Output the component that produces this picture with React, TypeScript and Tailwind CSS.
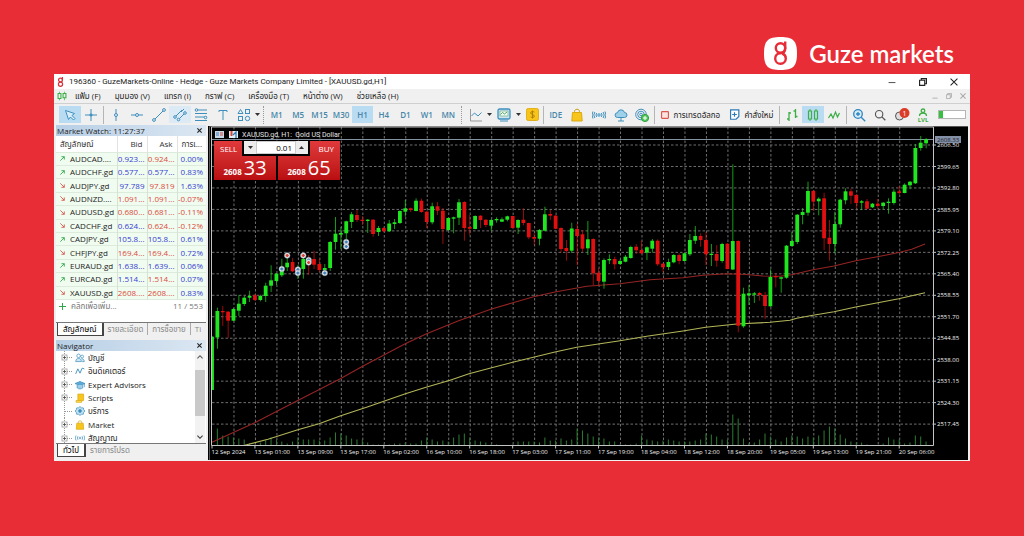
import { ReactNode } from 'react'
import clsx from 'clsx'

type Dir = 'u' | 'd'
// direction, high, body top, body bottom, low
type Candle = [Dir, number, number, number, number]

const STEP = 5.369
const LEFT = 212
const RIGHT = 933
const TOP = 127
const BASE = 445.5

const candles: Candle[] = [
  ['u', 336, 336.7, 390, 390], ['u', 307.7, 311, 337.5, 348.7], ['d', 306, 311, 312.3, 326], ['d', 311, 311.7, 320.7, 338],
  ['u', 308, 309, 320.7, 321], ['u', 295, 303.7, 310.7, 316], ['u', 296, 297.7, 304, 306], ['u', 290.7, 296, 297.7, 302],
  ['d', 294, 295.3, 300, 301], ['u', 294.7, 296, 300, 301.3], ['u', 282.7, 285.7, 296, 302], ['u', 265.3, 280.3, 285.7, 292],
  ['u', 273, 273.7, 281, 285], ['u', 258.7, 268.7, 275.3, 277], ['u', 253.7, 262.7, 267.3, 271], ['d', 258, 262, 271.3, 272],
  ['u', 265, 268, 272, 279], ['u', 253.7, 259, 269, 278.7], ['d', 255, 258, 263, 275], ['d', 250.7, 259, 264.7, 269],
  ['d', 258.7, 264, 270, 272], ['u', 264, 268, 270, 273], ['u', 241, 242, 268, 271], ['u', 217, 233.7, 242, 249.7],
  ['u', 227, 233, 234.7, 249], ['u', 220.7, 221.3, 233.3, 239], ['u', 212, 214.3, 222, 228], ['d', 210, 215, 220, 222],
  ['d', 216, 219.7, 221, 225], ['u', 219, 219.7, 221, 233], ['d', 219, 219.7, 234, 236.7], ['u', 226, 228, 232, 236],
  ['d', 227, 228, 231.3, 232], ['u', 220, 223.5, 231.3, 232], ['u', 219, 222.3, 224, 229], ['u', 210.3, 211, 223, 224],
  ['u', 200, 208.3, 211.7, 216.7], ['d', 207.7, 208.3, 210, 212], ['u', 198.3, 200.7, 211, 211.3], ['d', 198.7, 200.7, 212, 212.7],
  ['d', 211, 211.7, 222, 228], ['u', 202.7, 206.3, 222.3, 224.3], ['d', 202, 206.3, 210.7, 215], ['d', 208, 210.7, 229, 244],
  ['u', 217.7, 218, 230, 231], ['u', 216.7, 217.3, 218.7, 233.3], ['u', 199, 202.3, 217.7, 225], ['d', 201.3, 202, 228, 240.7],
  ['d', 215, 227, 228.7, 235], ['u', 215.3, 216, 229, 229.3], ['d', 215.3, 215.7, 220, 228], ['d', 219.3, 219.7, 225, 227.3],
  ['u', 219, 220, 225.7, 230.7], ['u', 217.3, 219, 220.3, 222.7], ['u', 217.3, 219.3, 221.7, 222], ['u', 215.7, 216.3, 219.7, 221.3],
  ['d', 215.7, 216, 228, 228.7], ['u', 219.3, 220, 227.7, 234], ['d', 208.3, 219.7, 223, 225.3], ['d', 222.7, 223, 237.3, 239.3],
  ['d', 233, 237, 238.7, 244.7], ['u', 229, 230, 238.7, 245.3], ['u', 206.7, 214.3, 230.7, 231.3], ['d', 210, 214, 215.7, 220],
  ['d', 215, 215.7, 228.7, 229.3], ['d', 227.3, 228, 249, 252.7], ['d', 240, 248, 251, 260.7], ['u', 222.7, 228.5, 250.7, 253],
  ['d', 223.7, 229, 236, 265], ['d', 230, 234.3, 248.7, 251.7], ['u', 221, 239.3, 248.3, 255], ['d', 238.3, 239, 273.3, 285],
  ['d', 268, 272.7, 281, 285], ['u', 258.3, 260, 281.7, 288.7], ['u', 254.3, 259, 260.3, 264], ['d', 256.7, 259, 264.3, 269.3],
  ['u', 259.3, 261, 264, 265], ['u', 255, 256.7, 261.7, 262.3], ['u', 245.7, 247, 258, 258.7], ['d', 244, 246.7, 250.3, 254],
  ['d', 240.7, 250, 253.3, 254], ['u', 246.3, 247.3, 252.7, 260], ['u', 239, 240.7, 248.7, 252.7], ['d', 239.3, 240.7, 264.3, 266],
  ['d', 263, 263.7, 267.3, 272.3], ['u', 258.7, 262, 267, 270], ['u', 254, 255, 262.3, 263.3], ['d', 253.3, 255, 261, 264.3],
  ['u', 252.7, 253.3, 261, 261.7], ['u', 234, 240, 254.3, 256], ['u', 226, 236, 240.7, 244], ['d', 233.3, 236, 240, 246.7],
  ['d', 232.3, 240, 254.3, 265], ['u', 244, 253.7, 255, 266], ['d', 245, 254, 260.7, 266.7], ['u', 242.7, 244, 261, 262.7],
  ['d', 243, 243.7, 269, 269.3], ['u', 164.3, 241, 269.5, 270], ['d', 240.3, 241, 325.7, 332.3], ['u', 287.7, 293.7, 326.3, 327.7],
  ['u', 285, 293.3, 295.3, 305], ['u', 292, 293.3, 294.7, 303], ['d', 292, 293, 295, 300.7], ['d', 292, 295, 306, 319],
  ['u', 269.3, 277, 306.3, 306.7], ['d', 273.3, 276, 277.3, 287.3], ['u', 276.7, 277.3, 278.7, 292.7], ['u', 245, 245.7, 277.7, 278.7],
  ['u', 231.7, 241, 246, 246.7], ['u', 214, 214.7, 242, 244], ['u', 208, 212, 215, 224.3], ['u', 181.7, 191, 212.7, 215.7],
  ['d', 190, 191, 201.7, 210.7], ['u', 197.3, 198.7, 201.3, 215.3], ['d', 192.7, 198.3, 238.3, 250], ['d', 220, 237.7, 244, 260.7],
  ['u', 211.7, 224, 244, 253.3], ['u', 198.7, 199.7, 224.3, 227.7], ['u', 188.3, 191.3, 200.3, 204.3], ['d', 188.7, 191.3, 195.7, 204],
  ['d', 194, 195, 203, 208.3], ['u', 200, 201.3, 202.7, 210], ['d', 199, 201.3, 208.7, 209.3], ['u', 203, 203.7, 207.3, 208],
  ['d', 199, 203.7, 206, 208.7], ['u', 202, 202.7, 206, 209.3], ['u', 198.3, 201.7, 203, 213.7], ['u', 189.3, 191.7, 203, 204.7],
  ['d', 186, 191.3, 193, 194.3], ['u', 183.3, 184.7, 193, 193.3], ['u', 181, 181.7, 185.3, 189.3], ['u', 144, 148, 183.3, 184],
  ['u', 136, 142.7, 148, 150.7], ['u', 138, 139.3, 143.3, 148.3],
]

const volumes = [
  0, 17, 10, 9, 8, 7, 6, 2, 1, 3, 5, 8, 6, 4, 2, 4, 8, 6, 6, 6, 5, 5, 8, 13, 12, 10, 7, 6, 6, 3, 1, 1, 1, 1, 2, 2, 3, 2, 2, 5,
  8, 6, 4, 5, 4, 8, 11, 12, 8, 5, 4, 3, 1, 1, 0, 0, 1, 4, 4, 4, 4, 3, 8, 5, 5, 7, 5, 6, 17, 15, 12, 9, 8, 7, 4, 4, 1, 1, 1, 2,
  10, 6, 5, 4, 5, 6, 5, 4, 4, 4, 5, 6, 12, 11, 9, 6, 6, 31, 27, 7, 2, 3, 6, 12, 9, 6, 4, 8, 10, 9, 7, 9, 8, 10, 15, 19, 17, 11,
  7, 4, 3, 3, 1, 0, 0, 2, 8, 6, 6, 2, 3, 10, 9, 4,
]

const fastMa =
  '212,442.3 254.7,422.7 297.3,400.7 340.3,378.7 361.7,366.7 404.7,344 426,334 458,321 490.7,309.3 512,303 533.7,296.7 555,292 586.7,286.3 620,283.7 650,279.7 683,277.7 703,275.3 726.7,273.7 746.7,274.5 763,276 780,276.3 791.7,274.7 813,269.7 834,266 855.7,260.7 880,256.3 900,252.3 911.7,249.3 925,244'
const slowMa =
  '244.7,445.3 268,439.3 297,430 319,423.7 340,416 368,406.7 404.7,394 426,387.3 450,380.3 469,373.7 490.7,368 512.7,362.3 555,352 576.7,347.3 620,340.7 646.7,336.3 683,331 705.7,327.3 736.7,324 770,322.3 790,320.3 796.7,318.3 813,315.3 834,311.7 855.7,307 898.7,298.7 925,292.7'

const times = [
  '12 Sep 2024', '13 Sep 01:00', '13 Sep 09:00', '13 Sep 17:00', '16 Sep 02:00', '16 Sep 10:00', '16 Sep 18:00',
  '17 Sep 03:00', '17 Sep 11:00', '17 Sep 19:00', '18 Sep 04:00', '18 Sep 12:00', '18 Sep 20:00', '19 Sep 05:00',
  '19 Sep 13:00', '19 Sep 21:00', '20 Sep 06:00',
]

const prices = [
  '2606.50', '2599.65', '2592.80', '2585.95', '2579.10', '2572.25', '2565.40', '2558.55', '2551.70', '2544.85',
  '2538.00', '2531.15', '2524.30', '2517.45',
]

// trade markers: candle index, y, colour
const markers: [number, number, string][] = [
  [13, 269, '#3d7fb8'], [14, 255.5, '#d8443a'], [16, 269.5, '#3d7fb8'], [16, 273, '#3d7fb8'], [17, 255.5, '#d8443a'],
  [18, 260, '#3d7fb8'], [18, 262.5, '#d8443a'], [21, 273, '#3d7fb8'], [25, 242, '#3d7fb8'], [25, 246.5, '#3d7fb8'],
]

const quotes = [
  { symbol: 'AUDCAD....', up: true, bid: '0.923...', bidUp: true, ask: '0.924...', askUp: false, change: '0.00%' },
  { symbol: 'AUDCHF.gd', up: true, bid: '0.577...', bidUp: true, ask: '0.577...', askUp: true, change: '0.83%' },
  { symbol: 'AUDJPY.gd', up: false, bid: '97.789', bidUp: true, ask: '97.819', askUp: false, change: '1.63%' },
  { symbol: 'AUDNZD....', up: false, bid: '1.091...', bidUp: false, ask: '1.091...', askUp: false, change: '-0.07%' },
  { symbol: 'AUDUSD.gd', up: false, bid: '0.680...', bidUp: false, ask: '0.681...', askUp: false, change: '-0.11%' },
  { symbol: 'CADCHF.gd', up: false, bid: '0.624...', bidUp: true, ask: '0.624...', askUp: false, change: '-0.12%' },
  { symbol: 'CADJPY.gd', up: true, bid: '105.8...', bidUp: true, ask: '105.8...', askUp: true, change: '0.61%' },
  { symbol: 'CHFJPY.gd', up: false, bid: '169.4...', bidUp: false, ask: '169.4...', askUp: false, change: '0.72%' },
  { symbol: 'EURAUD.gd', up: true, bid: '1.638...', bidUp: true, ask: '1.639...', askUp: true, change: '0.06%' },
  { symbol: 'EURCAD.gd', up: true, bid: '1.514...', bidUp: true, ask: '1.514...', askUp: false, change: '0.07%' },
  { symbol: 'XAUUSD.gd', up: false, bid: '2608....', bidUp: false, ask: '2608....', askUp: false, change: '0.83%' },
]

const menus = ['แฟ้ม (F)', 'มุมมอง (V)', 'แทรก (I)', 'กราฟ (C)', 'เครื่องมือ (T)', 'หน้าต่าง (W)', 'ช่วยเหลือ (H)']
const timeframes = ['M1', 'M5', 'M15', 'M30', 'H1', 'H4', 'D1', 'W1', 'MN']

function Glyph({ children, color = '#3f8fbd', size = 'size-[14px]' }: { children: ReactNode; color?: string; size?: string }) {
  return (
    <svg viewBox="0 0 14 14" className={clsx(size, 'shrink-0')} fill="none" stroke={color} strokeWidth="1" aria-hidden="true">
      {children}
    </svg>
  )
}

const drawTools: { label: string; icon: ReactNode; active?: boolean }[] = [
  { label: 'Vertical line', icon: <><path d="M7 1v12" /><circle cx="7" cy="7" r="1.5" fill="#f0f0f0" /></> },
  { label: 'Horizontal line', icon: <><path d="M1 7h12" /><circle cx="7" cy="7" r="1.5" fill="#f0f0f0" /></> },
  { label: 'Trend line', icon: <><path d="M2 12 12 2" /><circle cx="2" cy="12" r="1.4" fill="#f0f0f0" /><circle cx="12" cy="2" r="1.4" fill="#f0f0f0" /></> },
  { label: 'Channel', active: true, icon: <><path d="M2 9 9 2M5 12l7-7M8 4l3-3" /><circle cx="2" cy="9" r="1.3" fill="#dceaf5" /><circle cx="5.500" cy="11.500" r="1.3" fill="#dceaf5" /><circle cx="12" cy="5" r="1.3" fill="#dceaf5" /></> },
  { label: 'Fibonacci', icon: <><path d="M1 2h12M1 5.500h12M1 9h12M1 12.500h12" /><circle cx="2.500" cy="2" r="1.3" fill="#f0f0f0" /><circle cx="11.500" cy="9.500" r="1.3" fill="#f0f0f0" /></> },
  { label: 'Text', icon: <path d="M3 4V2.500h8V4M7 2.500V12" /> },
  { label: 'Shapes', icon: <><path d="M3.500 1.500 6 5.500H1z" /><rect x="8.500" y="1.500" width="4" height="4" /><rect x="1.500" y="8.500" width="4" height="4" /><circle cx="10.500" cy="10.500" r="2.200" /></> },
]

const serviceTools: { label: string; icon: ReactNode }[] = [
  { label: 'Market', icon: <><path d="M4.500 5V3.500C4.500 0.500 9.500 0.500 9.500 3.500V5" stroke="#c99a10" /><path d="M2.500 4.500h9l.7 8.500H1.800z" fill="#f7c51c" stroke="#dba912" /></> },
  { label: 'Signals', icon: <><circle cx="7" cy="7" r="1.200" /><path d="M4.800 5a3 3 0 0 0 0 4M9.200 5a3 3 0 0 1 0 4M2.900 4a5 5 0 0 0 0 6M11.100 4a5 5 0 0 1 0 6M1 3.500a7 7 0 0 0 0 7M13 3.500a7 7 0 0 1 0 7" /></> },
  { label: 'Cloud', icon: <><path d="M3.500 9.500a2.400 2.400 0 0 1 0-4.800 3.600 3.600 0 0 1 7-.2 2.500 2.500 0 0 1 0 5z" fill="#9fd0ea" /><path d="M7 9.500V13M4 13h6" /></> },
  { label: 'Virtual hosting', icon: <><circle cx="6" cy="6.500" r="5.300" /><circle cx="6" cy="6.500" r="3.300" /><circle cx="6" cy="6.500" r="1.300" /><circle cx="10" cy="10" r="3.600" fill="#52c85e" stroke="#2fa13d" /><path d="M10 8v4M8 10h4" stroke="#fff" /></> },
]

function ToolButton({ label, active, children }: { label: string; active?: boolean; children: ReactNode }) {
  return (
    <button
      type="button"
      aria-label={label}
      className={clsx('flex h-[17px] flex-1 items-center justify-center', active && 'bg-[#b9dcf3]')}
    >
      {children}
    </button>
  )
}

function Separator() {
  return <span className="mx-px h-[18px] w-px shrink-0 bg-[#b5b5b5]" />
}

function Caret() {
  return (
    <svg viewBox="0 0 5 3" className="h-[3px] w-[5px] shrink-0 fill-[#333]" aria-hidden="true">
      <path d="M0 0h5L2.500 3z" />
    </svg>
  )
}

function Header() {
  return (
    <header className="flex h-[74px] items-start justify-end gap-3 pt-9 pr-[70px]">
      <svg viewBox="0 0 33 33" className="mt-px size-[33px]" aria-hidden="true">
        <path d="M16.500 0C29 0 33 3.500 33 16.500S29 33 16.500 33 0 29.500 0 16.500 4 0 16.500 0z" fill="#fff" />
        <g fill="none" stroke="#e82c37" strokeWidth="2.400">
          <circle cx="16.500" cy="11" r="4.700" />
          <path d="M21.200 4.500v7c0 3-2 4.700-5 4.700a5.300 5.300 0 1 0 5.600 5.300c0-2.500-1.500-4.300-3.500-5" />
        </g>
      </svg>
      <span className="font-['Lato','Open_Sans',sans-serif] text-2xl leading-9 font-semibold text-white">Guze markets</span>
    </header>
  )
}

function TitleBar() {
  return (
    <div className="flex h-[15px] items-center bg-white pr-3 pl-[3px]">
      <svg viewBox="0 0 8 12" className="mr-[5px] h-[10px] w-[7px]" fill="none" stroke="#d5333c" strokeWidth="1.500" aria-hidden="true">
        <circle cx="4" cy="3.500" r="2.300" />
        <circle cx="4" cy="8.700" r="2.500" />
        <path d="M6.300 0v4" />
      </svg>
      <h1 className="flex-1 truncate font-['Roboto','Open_Sans',sans-serif] text-[8px] leading-3 text-[#222]">
        196360 - GuzeMarkets-Online - Hedge - Guze Markets Company Limited - [XAUUSD.gd,H1]
      </h1>
      <div className="flex items-center gap-[23px]">
        <button type="button" aria-label="Minimize"><Glyph color="#333" size="size-2"><path d="M1 8h12" strokeWidth="1.500" /></Glyph></button>
        <button type="button" aria-label="Restore"><Glyph color="#222" size="size-2"><path d="M1 4h9v9H1zM4 4V1h9v9h-3" strokeWidth="2" /></Glyph></button>
        <button type="button" aria-label="Close"><Glyph color="#222" size="size-2"><path d="m1 1 12 12M13 1 1 13" strokeWidth="1.800" /></Glyph></button>
      </div>
    </div>
  )
}

function MenuBar() {
  return (
    <nav className="flex h-[14px] items-center bg-[#f0f0f0] pr-1 pl-[3px]">
      <Glyph color="#3cae45" size="size-[10px]"><path d="M3.500 1v12M10.500 1v12" /><path d="M1.500 3.500h4v7h-4zM8.500 3.500h4v6h-4z" fill="#f0f0f0" strokeWidth="1.500" /></Glyph>
      <div className="ml-2 flex flex-1 gap-[14px]">
        {menus.map((menu) => (
          <button key={menu} type="button" className="text-[8px] leading-3 whitespace-nowrap text-[#222]">{menu}</button>
        ))}
      </div>
      <div className="flex gap-2">
        <button type="button" aria-label="Minimize chart"><Glyph color="#aaa" size="size-[6px]"><path d="M1 12h12" strokeWidth="2" /></Glyph></button>
        <button type="button" aria-label="Restore chart"><Glyph color="#aaa" size="size-[6px]"><path d="M1 4h9v9H1zM4 4V1h9v9h-3" strokeWidth="2" /></Glyph></button>
        <button type="button" aria-label="Close chart"><Glyph color="#aaa" size="size-[6px]"><path d="m1 1 12 12M13 1 1 13" strokeWidth="2.500" /></Glyph></button>
      </div>
    </nav>
  )
}

function Toolbar() {
  return (
    <div className="flex h-[22px] items-center border-t border-[#cfcfcf] bg-[#f0f0f0] pr-1 pl-[5px]" role="toolbar">
      <div className="flex w-[43px]">
        <ToolButton label="Cursor" active>
          <Glyph><path d="m2.500 2.500 3 9 2-2.500 3 3 1.500-1.500-3-3 2.500-2z" fill="#d9edf9" /></Glyph>
        </ToolButton>
        <ToolButton label="Crosshair">
          <Glyph><path d="M7 1v12M1 7h12" /><path d="M5.500 7h3M7 5.500v3" strokeWidth="1.500" /></Glyph>
        </ToolButton>
      </div>
      <Separator />
      <div className="flex w-[150px]">
        {drawTools.map((tool) => (
          <button
            key={tool.label}
            type="button"
            aria-label={tool.label}
            className={clsx('flex h-[17px] flex-1 items-center justify-center', tool.active && 'bg-[#dceaf5]')}
          >
            <Glyph>{tool.icon}</Glyph>
          </button>
        ))}
      </div>
      <Caret />
      <span className="ml-[3px] h-[18px] w-[3px] shrink-0 border-l border-dotted border-[#999]" />
      <div className="flex w-[193px]">
        {timeframes.map((tf) => (
          <button
            key={tf}
            type="button"
            className={clsx(
              'flex h-[17px] flex-1 items-center justify-center text-[8px] font-semibold text-[#4787a8]',
              tf === 'H1' && 'bg-[#b9dcf3]',
            )}
          >
            {tf}
          </button>
        ))}
      </div>
      <span className="mx-[2px] h-[18px] w-[3px] shrink-0 border-l border-dotted border-[#999]" />
      <div className="flex w-[76px] items-center gap-[2px]">
        <ToolButton label="Chart type"><Glyph><path d="M1.500 1v12H13" stroke="#999" /><path d="m2.500 8 3-3 3.500 3L12.500 4.500" /></Glyph></ToolButton>
        <Caret />
        <ToolButton label="Templates"><Glyph><rect x="1" y="1" width="12" height="10" rx="1.500" fill="#cfe6ef" strokeWidth="1.300" /><rect x="3" y="3" width="8" height="5" fill="#f4faf4" stroke="#5aa37a" strokeWidth=".6" /><path d="m3.500 6.500 2-2 2 1.500 2.500-2" stroke="#4aa860" /><path d="M3 13h8" /></Glyph></ToolButton>
        <Caret />
        <ToolButton label="Trade">
          <svg viewBox="0 0 14 14" className="size-[13px] shrink-0" aria-hidden="true">
            <rect x=".5" y=".5" width="13" height="13" rx="2" fill="#f8c419" stroke="#deac10" />
            <path d="M9 4.500C8 3.500 5 3.500 5 5.300S9 7 9 8.800 6 10.500 5 9.500M7 2.800v8.400" fill="none" stroke="#a87c08" />
          </svg>
        </ToolButton>
      </div>
      <Separator />
      <div className="flex w-[108px]">
        <button type="button" className="flex h-[17px] flex-1 items-center justify-center text-[8px] font-semibold text-[#4787a8]">IDE</button>
        {serviceTools.map((tool) => (
          <ToolButton key={tool.label} label={tool.label}><Glyph>{tool.icon}</Glyph></ToolButton>
        ))}
      </div>
      <Separator />
      <div className="flex flex-1 items-center justify-around">
        <button type="button" className="flex items-center gap-[5px] text-[8px] whitespace-nowrap text-[#222]">
          <Glyph color="#dc5a50" size="size-2"><rect x="1" y="1" width="12" height="12" rx="1" fill="#fbe3e0" strokeWidth="2" /></Glyph>
          การเทรดอัลกอ
        </button>
        <button type="button" className="flex items-center gap-1 text-[8px] whitespace-nowrap text-[#222]">
          <Glyph size="size-[11px]" color="#2d7ab5"><path d="M2 1h10.500v8.500L9 13H2z" fill="#fff" strokeWidth="1.500" /><path d="M7 4v6M4 7h6" strokeWidth="1.500" /></Glyph>
          คำสั่งใหม่
        </button>
      </div>
      <Separator />
      <div className="flex w-[64px]">
        <ToolButton label="Bar chart"><Glyph color="#3cae45"><path d="M4 4v9M4 5h2M2 11h2M10.500 1v9M8.500 3h2M10.500 8.500h2" strokeWidth="1.300" /></Glyph></ToolButton>
        <ToolButton label="Candlesticks" active><Glyph color="#3cae45"><path d="M4 1v12M10 1v12" /><path d="M2.500 3h3v8h-3zM8.500 3h3v8h-3z" fill="#b9dcf3" strokeWidth="1.200" /></Glyph></ToolButton>
        <ToolButton label="Line chart"><Glyph color="#3cae45"><path d="m1.500 10 2.500-4 2 4 2.500-6 2 5 2-4" strokeWidth="1.200" /></Glyph></ToolButton>
      </div>
      <Separator />
      <div className="mr-1 flex w-[86px]">
        <ToolButton label="Zoom in"><Glyph color="#2d86c0"><circle cx="6" cy="6" r="4.300" fill="#d5ebf7" strokeWidth="1.300" /><path d="m9.200 9.200 4 4M4 6h4M6 4v4" strokeWidth="1.300" /></Glyph></ToolButton>
        <ToolButton label="Search"><Glyph color="#555" size="size-3"><circle cx="6" cy="6" r="4.300" strokeWidth="1.300" /><path d="m9.200 9.200 4 4" strokeWidth="1.500" /></Glyph></ToolButton>
        <ToolButton label="Notifications, 1 new">
          <svg viewBox="0 0 16 14" className="h-[14px] w-4" aria-hidden="true">
            <circle cx="5.500" cy="8" r="4" fill="#ddd" stroke="#555" />
            <circle cx="10.500" cy="5" r="5" fill="#dc3c26" />
            <text x="10.500" y="7.600" fontSize="7" textAnchor="middle" fill="#fff">1</text>
          </svg>
        </ToolButton>
        <ToolButton label="Level">
          <svg viewBox="0 0 14 14" className="size-[14px]" fill="none" stroke="#3cae45" strokeWidth="1.300" aria-hidden="true">
            <circle cx="7" cy="2.800" r="1.800" />
            <path d="M3.500 8c0-4 7-4 7 0" />
            <text x="7" y="13.500" fontSize="6" fontWeight="700" textAnchor="middle" fill="#3cae45" stroke="none">LVL</text>
          </svg>
        </ToolButton>
      </div>
      <div className="h-[9px] w-7 border border-[#b5b5b5] bg-white" role="meter" aria-label="Connection">
        <div className="h-full w-1 bg-[#35c13f]" />
      </div>
    </div>
  )
}

function PanelTitle({ children }: { children: ReactNode }) {
  return (
    <div className="flex h-[11px] items-center justify-between bg-linear-to-r from-[#b7cfe6] to-[#dce7f2] pr-1 pl-px">
      <h2 className="text-[8px] leading-[10px] text-[#222]">{children}</h2>
      <button type="button" aria-label="Close panel">
        <Glyph color="#222" size="size-[5px]"><path d="m1 1 12 12M13 1 1 13" strokeWidth="3" /></Glyph>
      </button>
    </div>
  )
}

function PanelTabs({ tabs }: { tabs: string[] }) {
  return (
    <div className="flex h-[14px] items-start overflow-hidden border-t border-[#777] bg-[#f0f0f0] pl-px" role="tablist">
      {tabs.map((tab, i) => (
        <button
          key={tab}
          type="button"
          role="tab"
          aria-selected={i === 0}
          className={clsx(
            'shrink-0 text-[8px] leading-3 whitespace-nowrap',
            i === 0 ? '-mt-px h-[14px] border-r-2 border-b border-l border-[#444] bg-white px-[5px] text-black' : 'px-1 text-[#888]',
            i > 1 && 'border-l border-[#aaa]',
          )}
        >
          {tab}
        </button>
      ))}
    </div>
  )
}

function MarketWatch() {
  return (
    <section>
      <PanelTitle>Market Watch: 11:27:37</PanelTitle>
      <div className="bg-white">
        <table className="h-[164px] w-full table-fixed border-collapse text-[8px] leading-3">
          <thead>
            <tr className="h-4 text-[#333]">
              <th className="w-[61px] border-r border-[#e2e2e2] pl-1 text-left font-normal">สัญลักษณ์</th>
              <th className="w-[30px] border-r border-[#e2e2e2] pr-1 text-right font-normal">Bid</th>
              <th className="w-[30px] border-r border-[#e2e2e2] pr-1 text-right font-normal">Ask</th>
              <th className="pr-1 text-right font-normal whitespace-nowrap">การเ...</th>
            </tr>
          </thead>
          <tbody>
            {quotes.map((q) => (
              <tr key={q.symbol} className="border-y border-[#dcebdc] bg-[#f1fcf1]">
                <td className="border-r border-[#d5e2d5] p-0 pl-1">
                  <span className="flex items-center gap-[5px] text-[#222]">
                    <Glyph color={q.up ? '#2fa84a' : '#d8564a'} size="size-[5px]">
                      <path d={q.up ? 'M1 13 12 2M4 2h8v8' : 'M1 1l11 11M12 4v8H4'} strokeWidth="2.500" />
                    </Glyph>
                    {q.symbol}
                  </span>
                </td>
                <td className={clsx('border-r border-[#d5e2d5] p-0 pr-[2px] text-right', q.bidUp ? 'text-[#3340d0]' : 'text-[#d94a3a]')}>{q.bid}</td>
                <td className={clsx('border-r border-[#d5e2d5] p-0 pr-[2px] text-right', q.askUp ? 'text-[#3340d0]' : 'text-[#d94a3a]')}>{q.ask}</td>
                <td className={clsx('p-0 pr-[3px] text-right', q.change.startsWith('-') ? 'text-[#d94a3a]' : 'text-[#3340d0]')}>{q.change}</td>
              </tr>
            ))}
          </tbody>
        </table>
        <div className="flex h-[22px] items-start justify-between pr-[3px] pl-[3px] text-[8px] leading-3 text-[#777]">
          <button type="button" className="flex items-center gap-[5px]">
            <Glyph color="#2fa84a" size="size-[7px]"><path d="M7 0v14M0 7h14" strokeWidth="2" /></Glyph>
            คลิกเพื่อเพิ่ม...
          </button>
          <span>11 / 553</span>
        </div>
      </div>
      <PanelTabs tabs={['สัญลักษณ์', 'รายละเอียด', 'การซื้อขาย', 'Ti']} />
    </section>
  )
}

const navItems: { label: string; icon: ReactNode; leaf?: boolean }[] = [
  { label: 'บัญชี', icon: <><circle cx="5" cy="4" r="2.500" /><circle cx="10" cy="5" r="2" /><path d="M1 12c0-6 8-6 8 0zM9 8c3 0 4 2 4 4h-3" fill="#cde6f5" /></> },
  { label: 'อินดิเคเตอร์', icon: <path d="m1 11 3-7 3 6 3-7 3 1" strokeWidth="1.300" /> },
  { label: 'Expert Advisors', icon: <><path d="m0 5 7-3 7 3-7 3z" fill="#5ba9d6" /><path d="M3 7v4c2 2 6 2 8 0V7" fill="#9ccdea" /><path d="M13.500 5v5" /></> },
  { label: 'Scripts', icon: <><path d="M4 1.500h8v9H4z" fill="#f7c51c" stroke="#dba912" /><path d="M1.500 10.500h8v2.500h-8z" fill="#ffdb58" stroke="#dba912" /></> },
  { label: 'บริการ', leaf: true, icon: <><path d="m7 .8 2 1.700 2.800.2.400 2.600L14 7l-1.800 2 -.4 2.500-2.800.2L7 13.200l-2-1.500-2.800-.2L1.800 9 0 7l1.800-1.700.4-2.600L5 2.500z" fill="#bfe0f2" /><circle cx="7" cy="7" r="2" fill="#3f8fbd" /></> },
  { label: 'Market', icon: <><path d="M4.500 5V3.500C4.500 .5 9.500 .5 9.500 3.500V5" stroke="#c99a10" /><path d="M2.500 4.500h9l.7 8.500H1.800z" fill="#f7c51c" stroke="#dba912" /></> },
  { label: 'สัญญาณ', icon: <><circle cx="7" cy="7" r="1.200" /><path d="M4.200 4.500a4 4 0 0 0 0 5M9.800 4.500a4 4 0 0 1 0 5M1.500 3.500a6 6 0 0 0 0 7M12.500 3.500a6 6 0 0 1 0 7" /></> },
]

function Navigator() {
  return (
    <section className="mt-1">
      <PanelTitle>Navigator</PanelTitle>
      <div className="flex h-[92px] overflow-hidden bg-white">
        <ul className="flex h-[94px] flex-1 flex-col pl-[5px]">
          {navItems.map((item) => (
            <li key={item.label} className="flex flex-1 items-center gap-[3px] text-[8px] leading-3 text-[#222]">
              <svg viewBox="0 0 11 13" className="h-[13px] w-[11px] shrink-0" fill="none" stroke="#999" aria-hidden="true">
                <path d="M3.500 0v13M4 6.500h7" strokeDasharray="1 1" />
                {!item.leaf && <><rect x="1" y="4" width="5" height="5" fill="#fff" stroke="#999" strokeWidth=".8" /><path d="M2 6.500h3M3.500 5v3" stroke="#444" strokeWidth=".8" /></>}
              </svg>
              <Glyph size="size-[10px]">{item.icon}</Glyph>
              {item.label}
            </li>
          ))}
        </ul>
        <div className="mr-px flex w-[10px] flex-col items-center justify-between bg-[#f2f2f2] py-[3px]">
          <Glyph color="#555" size="size-[6px]"><path d="m1 10 6-6 6 6" strokeWidth="2.500" /></Glyph>
          <span className="mb-2 h-[46px] w-full bg-[#c9c9c9]" />
          <Glyph color="#333" size="size-[6px]"><path d="m1 4 6 6 6-6" strokeWidth="2.500" /></Glyph>
        </div>
      </div>
      <PanelTabs tabs={['ทั่วไป', 'รายการโปรด']} />
    </section>
  )
}

function Chart() {
  const columns = Array.from({ length: 33 }, (_, i) => LEFT + i * STEP * 4 + 0.5)
  const rows = prices.map((_, i) => 145 + i * 21.47)

  return (
    <svg viewBox="208 126 760 334" className="block h-auto w-full bg-black" role="img" aria-label="XAUUSD.gd H1 candlestick chart">
      <path d="M209.500 460V126.500H968" fill="none" stroke="#555" />
      <g stroke="#6f6f6f" strokeWidth="1" strokeDasharray="2.500 2">
        {columns.slice(1).map((x) => <path key={x} d={`M${x} ${TOP}V${BASE}`} />)}
        {rows.map((y) => <path key={y} d={`M${LEFT} ${y}H${RIGHT}`} />)}
      </g>
      <g stroke="#2b7d33" strokeWidth="1">
        {volumes.map((v, i) => v > 0 && <path key={i} d={`M${LEFT + i * STEP} ${BASE}v${-v}`} />)}
      </g>
      <path d={`M${LEFT} 139.500H${RIGHT}`} stroke="#8592a0" />
      <polyline points={fastMa} fill="none" stroke="#962424" strokeWidth="1.100" />
      <polyline points={slowMa} fill="none" stroke="#b3b558" strokeWidth="1.100" />
      {candles.map(([dir, high, top, bottom, low], i) => {
        const x = LEFT + i * STEP
        const half = i === 0 ? 0.5 : 1.9
        return (
          <g key={i} fill={dir === 'u' ? '#1fe61f' : '#e01010'}>
            <rect x={x - 0.4} y={high} width=".9" height={low - high} opacity=".75" />
            <rect x={x - half} y={top} width={half + 1.9} height={bottom - top} />
          </g>
        )
      })}
      {markers.map(([i, y, color]) => (
        <g key={`${i}-${y}`} transform={`translate(${LEFT + i * STEP} ${y})`}>
          <circle r="2.800" fill="#e8e8e8" stroke="#8fa5b8" strokeWidth=".5" />
          <path d="M-1.600 0h3.200M0-1.600v3.200" stroke={color} strokeWidth="1.500" />
        </g>
      ))}
      <path d={`M211.500 ${TOP}V${BASE}H${RIGHT + 0.5}V${TOP}z`} fill="none" stroke="#c4c4c4" />
      <g fill="#f2f2f2" fontSize="6" fontWeight="500" stroke="none">
        {times.map((time, i) => {
          const x = LEFT + i * STEP * 8
          return (
            <g key={time}>
              <path d={`M${x} ${BASE}v3`} stroke="#c4c4c4" />
              <text x={x - 0.5} y="454">{time}</text>
            </g>
          )
        })}
        {prices.map((price, i) => (
          <g key={price}>
            <path d={`M${RIGHT} ${rows[i]}h3`} stroke="#c4c4c4" />
            <text x="937" y={rows[i] + 2.2}>{price}</text>
          </g>
        ))}
      </g>
      <rect x="935" y="136" width="26" height="7" fill="#8490a6" />
      <text x="937" y="141.700" fontSize="6" fill="#1c2430">2608.33</text>
      <rect x="215" y="131" width="9" height="7" fill="#c9d8e6" />
      <path d="M216 133h3M216 135h3" stroke="#3d7fb8" />
      <path d="M220 133h3M220 135h3" stroke="#d8443a" />
      <rect x="229" y="131" width="9" height="7" fill="#e6eef5" />
      <path d="M231.500 131v5" stroke="#d8443a" strokeWidth="2" />
      <path d="m233 135 3-3v6" fill="none" stroke="#2d7ab5" strokeWidth="1.300" />
      <text x="242" y="136.500" fontSize="7" fill="#e4e4e4" className="font-['Roboto','Open_Sans',sans-serif] whitespace-pre">XAUUSD.gd, H1:  Gold US Dollar</text>
    </svg>
  )
}

function TradeButton({ label, small, big, end }: { label: string; small: string; big: string; end?: boolean }) {
  return (
    <button
      type="button"
      className={clsx(
        'flex h-[39px] w-[62px] flex-col justify-between bg-linear-to-b from-[#e0393b] to-[#ba0c10]',
        end ? 'items-end' : 'items-start',
      )}
    >
      <span className="px-[6px] text-[8px] leading-[15px]">{label}</span>
      <span className="flex w-full items-baseline justify-center gap-[2px]">
        <span className="text-[8px] font-bold">{small}</span>
        <span className="text-xl leading-6">{big}</span>
      </span>
    </button>
  )
}

function OneClickTrading() {
  return (
    <div className="absolute top-4 left-[6px] flex gap-[2px] bg-black pb-px text-white">
      <TradeButton label="SELL" small="2608" big="33" />
      <TradeButton label="BUY" small="2608" big="65" end />
      <div className="absolute top-0 left-[28px] flex h-[15px] w-[68px] items-stretch border-x-2 border-b-2 border-black bg-[#ececec]">
        <button type="button" aria-label="Decrease volume" className="flex w-3 items-center justify-center"><Caret /></button>
        <input
          type="text"
          aria-label="Volume"
          defaultValue="0.01"
          className="w-0 min-w-0 flex-1 border border-[#ccc] bg-white px-[3px] text-right text-[8px] leading-3 text-black outline-none"
        />
        <button type="button" aria-label="Increase volume" className="flex w-3 rotate-180 items-center justify-center"><Caret /></button>
      </div>
    </div>
  )
}

export default function App() {
  return (
    <div className="min-h-screen bg-[#e92d37] font-['Open_Sans','Noto_Sans_Thai','Noto_Sans',sans-serif]">
      <Header />
      <main className="mx-[54px] bg-[#f0f0f0]">
        <TitleBar />
        <MenuBar />
        <Toolbar />
        <div className="flex">
          <aside className="w-[154px] shrink-0 pr-[2px] pl-[2px]">
            <MarketWatch />
            <Navigator />
          </aside>
          <section className="relative min-w-0 flex-1 py-px pr-[2px]">
            <Chart />
            <OneClickTrading />
          </section>
        </div>
      </main>
    </div>
  )
}
